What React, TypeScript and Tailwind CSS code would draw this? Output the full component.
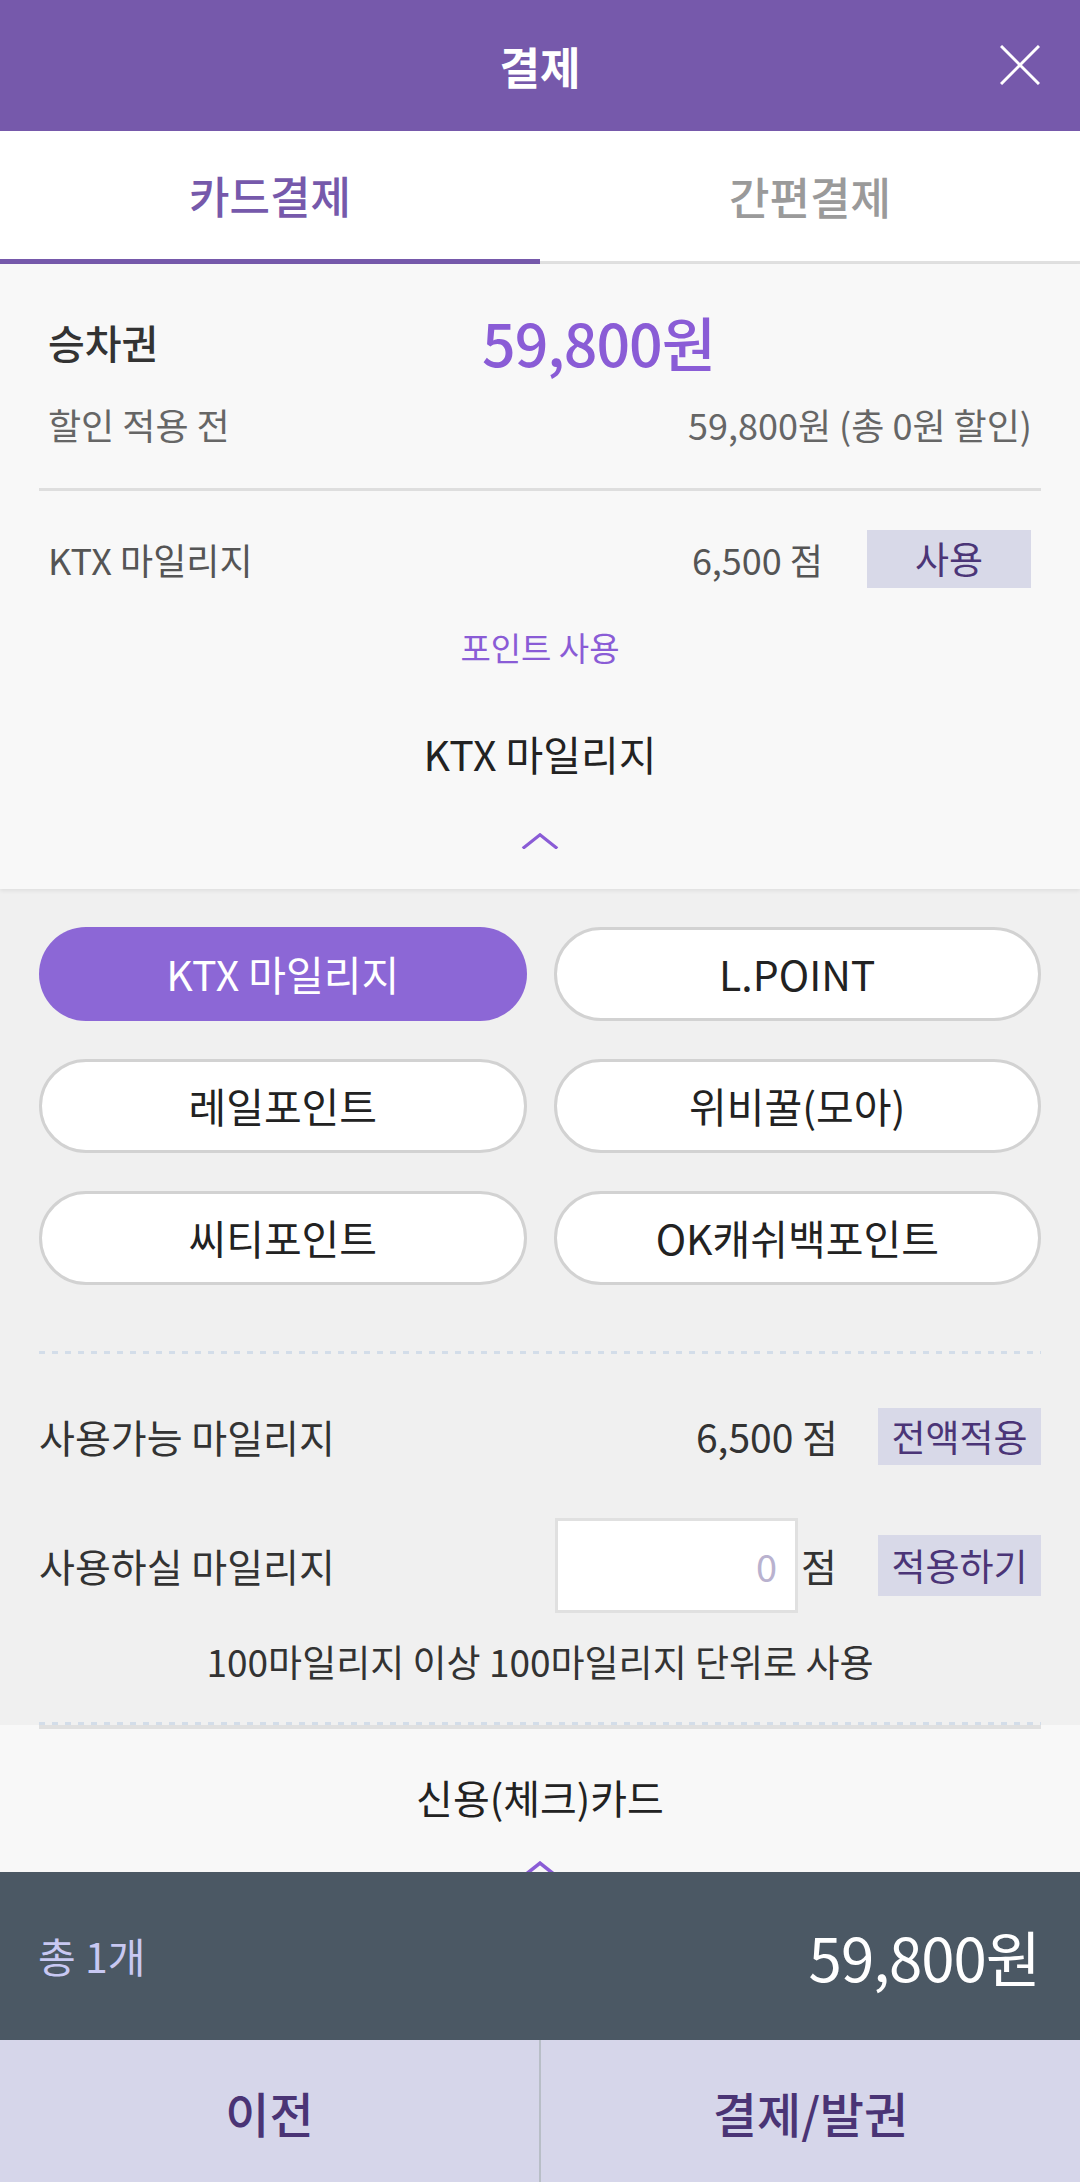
import { useState } from 'react';

const POINT_OPTIONS = ['KTX 마일리지', 'L.POINT', '레일포인트', '위비꿀(모아)', '씨티포인트', 'OK캐쉬백포인트'];

const DOTTED = 'h-[3px] bg-[image:repeating-linear-gradient(90deg,#d3dde9_0px,#d3dde9_6px,transparent_6px,transparent_13px)]';

function ChevronUp({ className }: { className?: string }) {
  return (
    <svg className={className} viewBox="0 0 36 16" fill="none" stroke="currentColor" strokeWidth={3.2} strokeLinecap="square">
      <path d="M2 14.5 L18 1.8 L34 14.5" />
    </svg>
  );
}

export default function App() {
  const [tab, setTab] = useState<'card' | 'simple'>('card');
  const [point, setPoint] = useState('KTX 마일리지');
  const [amount, setAmount] = useState('');

  return (
    <div className="w-[1080px] min-h-[2182px] bg-[#f0f0f0] font-['Noto_Sans_CJK_KR','Noto_Sans',sans-serif]">
      {/* 헤더 */}
      <header className="relative h-[131px] bg-[#7659ab] flex items-center justify-center">
        <h1 className="text-[44px] font-bold text-white leading-none">결제</h1>
        <button className="absolute right-[40px] top-[45px] w-[40px] h-[40px] text-white">
          <svg viewBox="0 0 40 40" className="w-[40px] h-[40px]" stroke="currentColor" strokeWidth={3} fill="none">
            <path d="M1 1 L39 39 M39 1 L1 39" />
          </svg>
        </button>
      </header>

      {/* 탭 */}
      <div className="h-[133px] flex bg-white">
        <button
          onClick={() => setTab('card')}
          className={`flex-1 flex items-center justify-center text-[44px] font-medium ${
            tab === 'card' ? 'text-[#7659ab] border-b-[5px] border-[#7659ab]' : 'text-[#999] border-b-[3px] border-[#e0e0e0]'
          }`}
        >
          카드결제
        </button>
        <button
          onClick={() => setTab('simple')}
          className={`flex-1 flex items-center justify-center text-[44px] font-medium ${
            tab === 'simple' ? 'text-[#7659ab] border-b-[5px] border-[#7659ab]' : 'text-[#9a9a9a] border-b-[3px] border-[#e0e0e0]'
          }`}
        >
          간편결제
        </button>
      </div>

      {/* 금액 요약 */}
      <section className="relative z-10 bg-[#f8f8f8] px-[39px] pt-[31px] pb-[40px] shadow-[0_2px_4px_rgba(0,0,0,0.07)]">
        <div className="h-[94px] flex items-center px-[9px]">
          <span className="w-[434px] text-[40px] font-medium text-[#333]">승차권</span>
          <span className="text-[59px] font-medium text-[#8a5cd6] tracking-[-1px]">59,800원</span>
        </div>
        <div className="h-[70px] flex items-center justify-between px-[9px] text-[36px] text-[#666]">
          <span>할인 적용 전</span>
          <span>59,800원 (총 0원 할인)</span>
        </div>
        <div className="mt-[29px] h-[3px] bg-[#dedede]" />
        <div className="mt-[39px] h-[58px] flex items-center pl-[9px] pr-[10px]">
          <span className="flex-1 text-[36px] text-[#555]">KTX 마일리지</span>
          <span className="text-[36px] text-[#555] mr-[44px]">6,500 점</span>
          <button className="w-[164px] h-[58px] bg-[#d8d9e8] text-[37px] text-[#4b3577]">사용</button>
        </div>
        <p className="mt-[41px] h-[36px] leading-[36px] text-center text-[33px] text-[#8a5cd6]">포인트 사용</p>
        <p className="mt-[68px] h-[40px] leading-[40px] text-center text-[41px] text-[#222]">KTX 마일리지</p>
        <div className="mt-[60px] flex justify-center">
          <ChevronUp className="w-[38px] h-[16px] text-[#8a5cd6]" />
        </div>
      </section>

      {/* 포인트 선택 */}
      <section className="bg-[#f0f0f0] px-[39px] pt-[38px]">
        <div className="grid grid-cols-2 gap-x-[27px] gap-y-[38px]">
          {POINT_OPTIONS.map(name => (
            <button
              key={name}
              onClick={() => setPoint(name)}
              className={`h-[94px] rounded-full text-[41px] ${
                point === name
                  ? 'bg-[#8c67d6] text-white'
                  : 'bg-white text-[#222] border-[3px] border-[#d2d2d2]'
              }`}
            >
              {name}
            </button>
          ))}
        </div>

        <div className={`mt-[66px] ${DOTTED}`} />

        <div className="mt-[54px] h-[57px] flex items-center">
          <span className="flex-1 text-[39px] text-[#333]">사용가능 마일리지</span>
          <span className="text-[39px] text-[#333] mr-[40px]">6,500 점</span>
          <button className="w-[163px] h-[57px] bg-[#d8d9e8] text-[37px] text-[#4b3577]">전액적용</button>
        </div>

        <div className="mt-[53px] h-[95px] flex items-center">
          <span className="flex-1 text-[39px] text-[#333]">사용하실 마일리지</span>
          <input
            value={amount}
            onChange={e => setAmount(e.target.value)}
            placeholder="0"
            className="w-[243px] h-[95px] bg-white border-[3px] border-[#e0e0e0] text-right pr-[18px] text-[38px] text-[#333] placeholder:text-[#b9b2cf] outline-none"
          />
          <span className="ml-[3px] text-[39px] text-[#333] mr-[41px]">점</span>
          <button className="w-[163px] h-[61px] bg-[#d8d9e8] text-[37px] text-[#4b3577]">적용하기</button>
        </div>

        <p className="mt-[30px] h-[36px] leading-[36px] text-center text-[37px] text-[#333]">
          100마일리지 이상 100마일리지 단위로 사용
        </p>

        <div className={`mt-[43px] ${DOTTED}`} />
      </section>

      {/* 신용카드 */}
      <section className="h-[147px] bg-[#f8f8f8] overflow-hidden">
        <div className="mx-[39px] h-[4px] bg-[#e0e0e0]" />
        <p className="mt-[48px] h-[40px] leading-[40px] text-center text-[40px] text-[#222]">신용(체크)카드</p>
        <div className="mt-[44px] flex justify-center">
          <ChevronUp className="w-[40px] h-[18px] text-[#8a5cd6]" />
        </div>
      </section>

      {/* 합계 */}
      <div className="h-[168px] bg-[#4b5864] flex items-center justify-between pl-[38px] pr-[40px]">
        <span className="text-[41px] text-[#c8c8f2]">총 1개</span>
        <span className="text-[60px] text-white tracking-[-1px]">59,800원</span>
      </div>

      {/* 하단 버튼 */}
      <div className="h-[144px] flex bg-[#d6d6ea]">
        <button className="flex-1 text-[48px] font-medium text-[#4a3475] border-r-[2px] border-[#b8bec7]">이전</button>
        <button className="flex-1 text-[48px] font-medium text-[#4a3475]">결제/발권</button>
      </div>
    </div>
  );
}
